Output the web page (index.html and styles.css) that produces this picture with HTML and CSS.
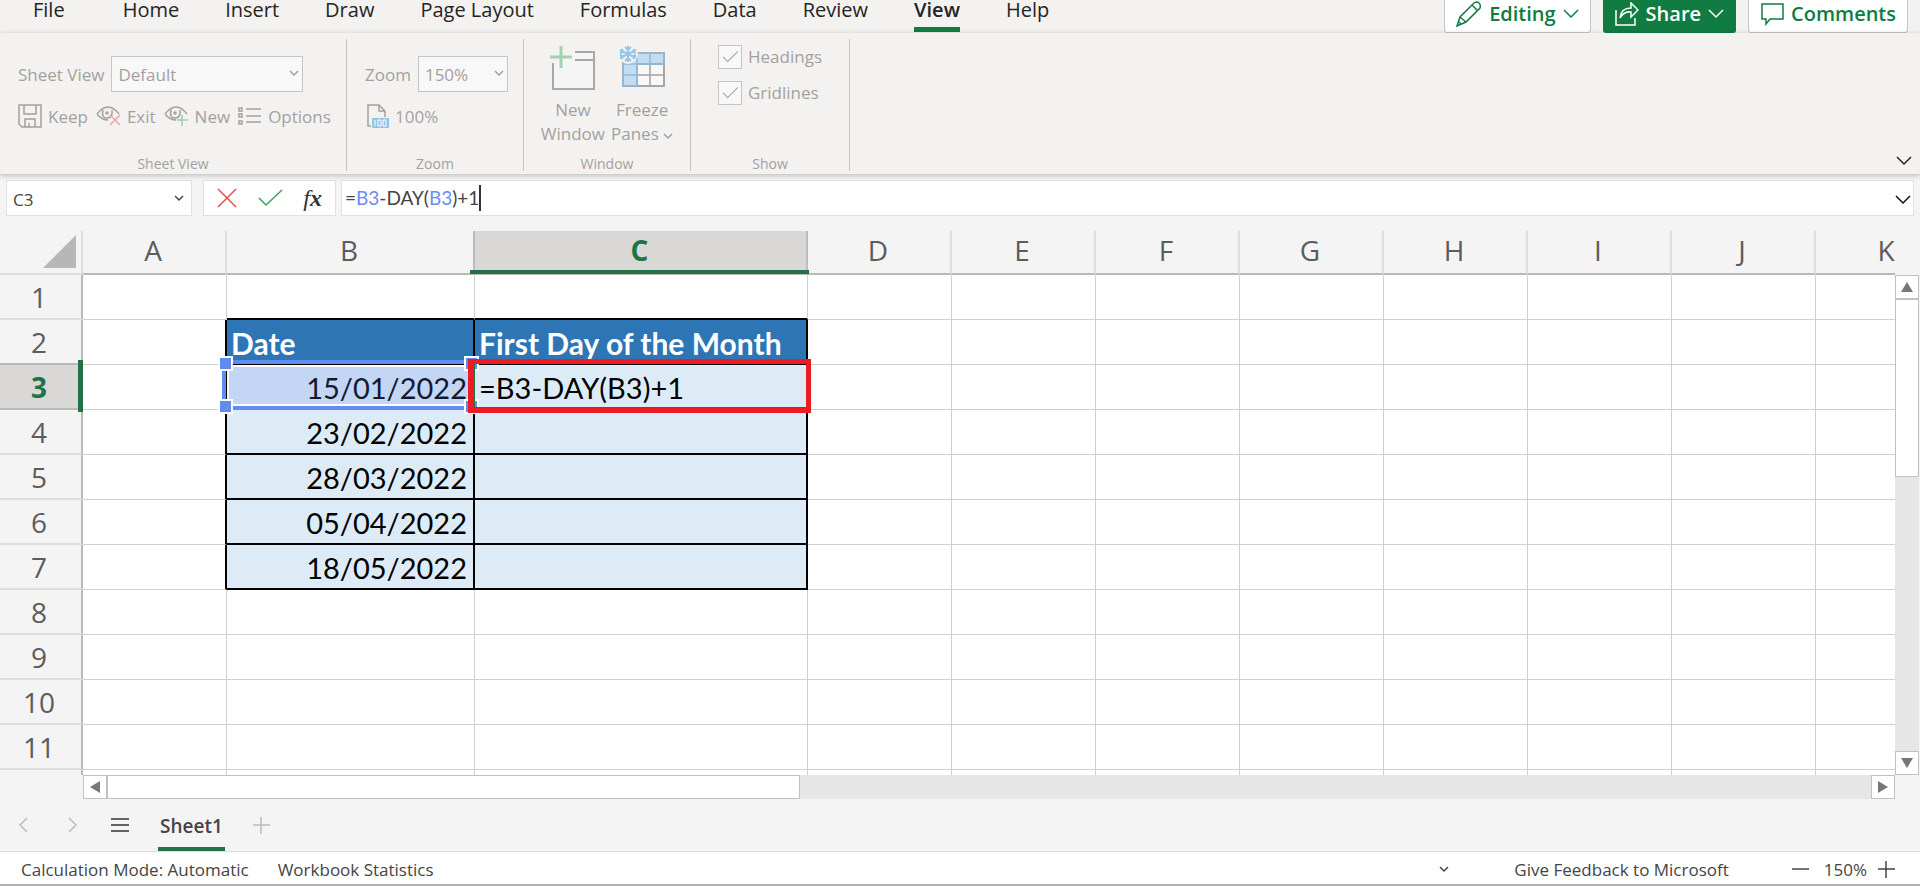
FILE: index.html
```html
<!DOCTYPE html>
<html lang="en">
<head>
  <meta charset="UTF-8" />
  <title>Book1 | Excel</title>
  <meta name="viewport" content="width=device-width, initial-scale=1.0" />
  <link rel="stylesheet" href="styles.css">
</head>
<body>

  <header class="topbar">
    <nav class="tabs">
      <a href="#" class="tab tab-file">File</a>
      <a href="#" class="tab">Home</a>
      <a href="#" class="tab">Insert</a>
      <a href="#" class="tab">Draw</a>
      <a href="#" class="tab">Page Layout</a>
      <a href="#" class="tab">Formulas</a>
      <a href="#" class="tab">Data</a>
      <a href="#" class="tab">Review</a>
      <a href="#" class="tab active">View</a>
      <a href="#" class="tab">Help</a>
    </nav>
    <div class="actions">
      <button class="action">
        <svg width="26" height="26" viewBox="0 0 26 26"><path d="M1 25l3-9L18 2q3-2 5 0t1 5L10 21zM4 16l6 5M16 4l6 6M3 21l2 2"/></svg>
        Editing
        <svg class="chev" width="16" height="10" viewBox="0 0 16 10"><path d="M1 1l7 7 7-7"/></svg>
      </button>
      <button class="action share">
        <svg width="24" height="24" viewBox="0 0 24 24"><path d="M1 8v15h19v-7M5 16q1-10 11-10V1l7 7-7 7v-5q-7-1-11 6z"/></svg>
        Share
        <svg class="chev" width="16" height="10" viewBox="0 0 16 10"><path d="M1 1l7 7 7-7"/></svg>
      </button>
      <button class="action comments">
        <svg width="24" height="24" viewBox="0 0 24 24"><path d="M2 2h21v15H10l-4 5v-5H2z"/></svg>
        Comments
      </button>
    </div>
  </header>

  <div class="ribbon">
    <section class="group group-view">
      <div class="group-body">
        <div class="line">
          <label for="sheetView">Sheet View</label>
          <span class="select-wrap wide">
            <select id="sheetView"><option>Default</option></select>
            <svg width="10" height="7" viewBox="0 0 10 7"><path d="M1 1l4 4 4-4"/></svg>
          </span>
        </div>
        <div class="line tools">
          <button class="tool">
            <svg width="24" height="24" viewBox="0 0 24 24"><path d="M1 1h22v22H4l-3-3zM6 1v9h12V1M7 23v-8h10v8M11 19v4"/></svg>
            Keep
          </button>
          <button class="tool">
            <svg width="25" height="20" viewBox="0 0 25 20"><path d="M1 8q11-14 22 0M1 8q5 6 11 6M7 4q-2 8 4 8 6 0 5-8"/><circle cx="11" cy="7" r="1"/><path class="red" d="M14 9l10 10M24 9L14 19"/></svg>
            Exit
          </button>
          <button class="tool">
            <svg width="25" height="20" viewBox="0 0 25 20"><path d="M1 8q11-14 22 0M1 8q5 6 11 6M7 4q-2 8 4 8 6 0 5-8"/><circle cx="11" cy="7" r="1"/><path class="green" d="M18 9v11M13 14h11"/></svg>
            New
          </button>
          <button class="tool">
            <svg width="24" height="18" viewBox="0 0 24 18"><path d="M1 1h3v3H1zM1 7h3v3H1zM1 14h3v3H1zM8 2h15M8 9h15M8 15h15"/></svg>
            Options
          </button>
        </div>
      </div>
      <h2>Sheet View</h2>
    </section>

    <section class="group group-zoom">
      <div class="group-body">
        <div class="line">
          <label for="zoom">Zoom</label>
          <span class="select-wrap">
            <select id="zoom"><option>150%</option></select>
            <svg width="10" height="7" viewBox="0 0 10 7"><path d="M1 1l4 4 4-4"/></svg>
          </span>
        </div>
        <div class="line tools">
          <button class="tool zoom-full">
            <svg width="22" height="24" viewBox="0 0 22 24"><path d="M4 22H1V1h11l6 6v6M12 1v6h6"/><rect class="badge" x="5" y="14" width="17" height="10"/><path class="badge-text" d="M8 16v6M11 16h3v6h-3zM16 16h3v6h-3z"/></svg>
            100%
          </button>
        </div>
      </div>
      <h2>Zoom</h2>
    </section>

    <section class="group group-window">
      <div class="group-body bigs">
        <button class="big">
          <svg width="48" height="46" viewBox="0 0 48 46"><path class="pane" d="M4 18v26h41V7H26M26 15h19"/><path class="plus" d="M12 1v22M1 12h22"/></svg>
          New<br>Window
        </button>
        <button class="big">
          <svg width="48" height="46" viewBox="0 0 48 46"><path class="cells" d="M5 8h41v33H5z"/><path class="frozen" d="M5 8h41v11H19v22H5z"/><path d="M19 19h27v22H19M19 30h27M32 19v22"/><path class="ice" d="M5 19h14M5 30h14M32 8v11M19 8v33M5 8h41v11H19v22H5z"/><circle class="halo" cx="10" cy="9" r="10"/><path class="flake" d="M10 1v16M2 5l16 8M2 13l16-8M7 2l3 3 3-3M7 16l3-3 3 3M2 8l3-1-1-3M18 8l-3-1 1-3M2 10l3 1-1 3M18 10l-3 1 1 3"/></svg>
          Freeze<br>Panes <svg class="mini" width="10" height="7" viewBox="0 0 10 7"><path d="M1 1l4 4 4-4"/></svg>
        </button>
      </div>
      <h2>Window</h2>
    </section>

    <section class="group group-show">
      <div class="group-body checks">
        <label class="check"><input type="checkbox" checked />Headings</label>
        <label class="check"><input type="checkbox" checked />Gridlines</label>
      </div>
      <h2>Show</h2>
    </section>

    <button class="collapse" aria-label="Collapse ribbon">
      <svg class="chev" width="16" height="10" viewBox="0 0 16 10"><path d="M1 1l7 7 7-7"/></svg>
    </button>
  </div>

  <div class="formula-bar">
    <div class="box name-box">
      <input type="text" aria-label="Name box" value="C3" />
      <svg width="10" height="7" viewBox="0 0 10 7"><path d="M1 1l4 4 4-4"/></svg>
    </div>
    <div class="box fx-box">
      <button aria-label="Cancel"><svg class="cancel" width="20" height="20" viewBox="0 0 20 20"><path d="M1 1l18 18M19 1L1 19"/></svg></button>
      <button aria-label="Enter"><svg class="enter" width="25" height="18" viewBox="0 0 25 18"><path d="M1 9l7 7L24 1"/></svg></button>
      <button class="fx" aria-label="Insert function"><i>f<b>x</b></i></button>
    </div>
    <div class="box formula">
      <div class="formula-text" role="textbox" aria-label="Formula" contenteditable="true" spellcheck="false">=<span class="ref">B3</span>-DAY(<span class="ref">B3</span>)+1<span class="caret"></span></div>
      <button aria-label="Expand formula bar">
        <svg class="chev" width="16" height="10" viewBox="0 0 16 10"><path d="M1 1l7 7 7-7"/></svg>
      </button>
    </div>
  </div>

  <main class="sheet">
    <div class="grid">
      <table>
        <colgroup>
          <col class="c-head"><col class="c-std"><col class="c-date"><col class="c-first">
          <col class="c-std"><col class="c-std"><col class="c-std"><col class="c-std">
          <col class="c-std"><col class="c-std"><col class="c-std"><col class="c-std">
        </colgroup>
        <thead>
          <tr><th class="corner"></th><th>A</th><th class="before">B</th><th class="current">C</th><th>D</th><th>E</th><th>F</th><th>G</th><th>H</th><th>I</th><th>J</th><th>K</th></tr>
        </thead>
        <tbody>
          <tr><th>1</th><td></td><td class="above"></td><td class="above"></td><td></td><td></td><td></td><td></td><td></td><td></td><td></td><td></td></tr>
          <tr><th class="before">2</th><td class="beside"></td><td class="title">Date</td><td class="title">First Day of the Month</td><td></td><td></td><td></td><td></td><td></td><td></td><td></td><td></td></tr>
          <tr><th class="current">3</th><td class="beside"></td><td class="data">15/01/2022<span class="range"></span><span class="handle tl"></span><span class="handle tr"></span><span class="handle bl"></span><span class="handle br"></span></td><td class="data text">=B3-DAY(B3)+1<span class="editor"></span></td><td></td><td></td><td></td><td></td><td></td><td></td><td></td><td></td></tr>
          <tr><th>4</th><td class="beside"></td><td class="data">23/02/2022</td><td class="data"></td><td></td><td></td><td></td><td></td><td></td><td></td><td></td><td></td></tr>
          <tr><th>5</th><td class="beside"></td><td class="data">28/03/2022</td><td class="data"></td><td></td><td></td><td></td><td></td><td></td><td></td><td></td><td></td></tr>
          <tr><th>6</th><td class="beside"></td><td class="data">05/04/2022</td><td class="data"></td><td></td><td></td><td></td><td></td><td></td><td></td><td></td><td></td></tr>
          <tr><th>7</th><td class="beside"></td><td class="data">18/05/2022</td><td class="data"></td><td></td><td></td><td></td><td></td><td></td><td></td><td></td><td></td></tr>
          <tr><th>8</th><td></td><td></td><td></td><td></td><td></td><td></td><td></td><td></td><td></td><td></td><td></td></tr>
          <tr><th>9</th><td></td><td></td><td></td><td></td><td></td><td></td><td></td><td></td><td></td><td></td><td></td></tr>
          <tr><th>10</th><td></td><td></td><td></td><td></td><td></td><td></td><td></td><td></td><td></td><td></td><td></td></tr>
          <tr><th>11</th><td></td><td></td><td></td><td></td><td></td><td></td><td></td><td></td><td></td><td></td><td></td></tr>
          <tr><th></th><td></td><td></td><td></td><td></td><td></td><td></td><td></td><td></td><td></td><td></td><td></td></tr>
        </tbody>
      </table>
    </div>
    <div class="scroll vertical">
      <button aria-label="Scroll up"><svg width="12" height="10" viewBox="0 0 12 10"><path d="M6 0l6 10H0z"/></svg></button>
      <div class="track"><div class="thumb"></div></div>
      <button aria-label="Scroll down"><svg width="12" height="10" viewBox="0 0 12 10"><path d="M0 0h12L6 10z"/></svg></button>
    </div>
  </main>

  <div class="scroll horizontal">
    <button aria-label="Scroll left"><svg width="10" height="12" viewBox="0 0 10 12"><path d="M10 0v12L0 6z"/></svg></button>
    <div class="track"><div class="thumb"></div></div>
    <button aria-label="Scroll right"><svg width="10" height="12" viewBox="0 0 10 12"><path d="M0 0l10 6-10 6z"/></svg></button>
  </div>

  <nav class="sheet-tabs">
    <button class="nav-btn" aria-label="Previous sheet"><svg width="9" height="16" viewBox="0 0 9 16"><path d="M8 1L1 8l7 7"/></svg></button>
    <button class="nav-btn" aria-label="Next sheet"><svg width="9" height="16" viewBox="0 0 9 16"><path d="M1 1l7 7-7 7"/></svg></button>
    <button class="all-sheets" aria-label="All sheets"><svg width="18" height="16" viewBox="0 0 18 16"><path d="M0 2h18M0 8h18M0 14h18"/></svg></button>
    <a href="#" class="sheet-tab">Sheet1</a>
    <button class="add" aria-label="New sheet"><svg width="17" height="17" viewBox="0 0 17 17"><path d="M8 0v17M0 8h17"/></svg></button>
  </nav>

  <footer class="status">
    <span>Calculation Mode: Automatic</span>
    <a href="#">Workbook Statistics</a>
    <svg class="status-chev" width="10" height="7" viewBox="0 0 10 7"><path d="M1 1l4 4 4-4"/></svg>
    <a href="#" class="feedback">Give Feedback to Microsoft</a>
    <button aria-label="Zoom out"><svg width="17" height="17" viewBox="0 0 17 17"><path d="M0 8h17"/></svg></button>
    <span class="zoom-value">150%</span>
    <button aria-label="Zoom in"><svg width="17" height="17" viewBox="0 0 17 17"><path d="M8 0v17M0 8h17"/></svg></button>
  </footer>

</body>
</html>
```

FILE: styles.css
```css
* {
  box-sizing: border-box;
}

body {
  margin: 0;
  height: 100vh;
  display: flex;
  flex-direction: column;
  overflow: hidden;
  font-family: "Open Sans", "Noto Sans", sans-serif;
  font-size: 17px;
  color: #444;
  background: #f4f4f4;
}

a {
  color: inherit;
  text-decoration: none;
}

button {
  margin: 0;
  padding: 0;
  border: none;
  background: none;
  font: inherit;
  color: inherit;
  cursor: pointer;
}

svg {
  flex: none;
  fill: none;
  stroke: currentColor;
  stroke-width: 1.5;
}

/* Top bar */
.topbar {
  display: flex;
  justify-content: space-between;
  height: 33px;
  padding: 0 12px 0 33px;
  background: #f3f2f0;
}

.tabs {
  display: flex;
  gap: 46px;
  font-size: 20px;
  line-height: 20px;
  color: #252423;
}

.tab {
  height: 32px;
  border-bottom: 5px solid transparent;
}

.tab-file {
  margin-right: 12px;
}

.tab.active {
  font-weight: 600;
  border-color: #107c41;
}

.actions {
  display: flex;
  gap: 12px;
}

.action {
  display: flex;
  align-items: center;
  gap: 7px;
  padding: 0 11px 5px;
  font-size: 20px;
  font-weight: 600;
  line-height: 26px;
  color: #107c41;
  background: #fff;
  border: 1px solid #c8c6c4;
  border-top: none;
  border-radius: 0 0 3px 3px;
}

.share {
  color: #fff;
  background: #107c41;
  border-color: #107c41;
}

/* Ribbon */
.ribbon {
  position: relative;
  z-index: 1;
  flex: none;
  display: flex;
  height: 142px;
  padding: 6px 8px 3px 0;
  color: #a3a19f;
  background: #f3f2f0;
  border-bottom: 1px solid #d0cfcb;
  box-shadow: 0 1px 5px rgba(0, 0, 0, 0.2);
}

.group {
  display: flex;
  flex-direction: column;
  justify-content: space-between;
  border-right: 1px solid #c6c5c3;
}

.group h2 {
  margin: 0;
  font-size: 14px;
  font-weight: 400;
  line-height: 14px;
  text-align: center;
}

.group-view {
  width: 347px;
}

.group-zoom {
  width: 177px;
}

.group-window {
  width: 167px;
}

.group-show {
  width: 159px;
}

.group-view .group-body,
.group-zoom .group-body {
  padding: 17px 0 0 18px;
}

.line {
  display: flex;
  align-items: center;
  gap: 7px;
  height: 36px;
}

.line.tools {
  gap: 8px;
  height: 48px;
}

.tool {
  display: flex;
  align-items: center;
  gap: 6px;
}

.zoom-full {
  padding-left: 2px;
}

.select-wrap {
  position: relative;
  width: 90px;
}

.select-wrap.wide {
  width: 192px;
}

select {
  width: 100%;
  height: 36px;
  padding: 0 6px;
  appearance: none;
  font: inherit;
  color: inherit;
  background: #f8f8f8;
  border: 1px solid #c6c4c4;
  border-radius: 0;
}

.select-wrap svg {
  position: absolute;
  right: 4px;
  top: 14px;
}

.red {
  stroke: #f0a5a5;
}

.green {
  stroke: #9bd0a9;
}

.badge {
  fill: #93c5e4;
  stroke: none;
}

.badge-text {
  stroke: #fff;
  stroke-width: 1;
}

.bigs {
  display: flex;
  justify-content: center;
  gap: 6px;
  padding-top: 6px;
}

.big {
  line-height: 24px;
  text-align: center;
}

.big > svg {
  display: block;
  margin: 0 auto 7px;
}

.big .mini {
  display: inline;
  margin: 0;
}

.pane {
  fill: #f5f5f5;
  stroke: #a9a8a6;
  stroke-width: 2;
}

.plus {
  stroke: #a5d3b1;
  stroke-width: 3;
}

.cells {
  fill: #f8f8f8;
}

.frozen {
  fill: #c5dcf0;
}

.ice {
  stroke: #8fb9de;
}

.halo {
  fill: #f3f2f0;
  stroke: none;
}

.flake {
  stroke: #93c7e6;
  stroke-width: 2;
}

.checks {
  display: flex;
  flex-direction: column;
  gap: 12px;
  padding: 6px 0 0 27px;
}

.check {
  display: flex;
  align-items: center;
  gap: 6px;
  line-height: 24px;
}

.check input {
  position: relative;
  width: 24px;
  height: 24px;
  margin: 0;
  appearance: none;
  background: #f8f8f8;
  border: 1px solid #c6c4c4;
}

.check input:checked::after {
  content: "";
  position: absolute;
  left: 8px;
  top: 1px;
  width: 6px;
  height: 14px;
  border: solid #a3a19f;
  border-width: 0 1px 1px 0;
  transform: rotate(45deg);
}

.collapse {
  align-self: flex-end;
  margin-left: auto;
  color: #252423;
}

/* Formula bar */
.formula-bar {
  flex: none;
  display: flex;
  height: 56px;
  padding: 5px 6px 15px;
}

.box {
  display: flex;
  align-items: center;
  background: #fff;
  border: 1px solid #e1e1e1;
}

.name-box {
  width: 186px;
  margin-right: 11px;
  padding-right: 7px;
}

.name-box input {
  flex: 1;
  min-width: 0;
  padding: 2px 6px 0;
  font: inherit;
  color: inherit;
  background: none;
  border: none;
}

.fx-box {
  justify-content: space-between;
  width: 133px;
  margin-right: 5px;
  padding: 0 13px;
}

.cancel {
  stroke: #ec4a4a;
}

.enter {
  stroke: #3da35a;
}

.fx-box svg {
  display: block;
}

.fx {
  font-family: "Liberation Serif", serif;
  font-size: 24px;
  line-height: 28px;
  color: #333;
}

.formula {
  flex: 1;
  padding: 0 2px 0 3px;
}

.formula-text {
  flex: 1;
  display: flex;
  align-items: center;
  font-family: Lato, sans-serif;
  font-size: 19px;
  line-height: 26px;
  outline: none;
}

.ref {
  color: #6a8ff0;
}

.caret {
  width: 2px;
  height: 26px;
  background: #333;
}

.formula .chev {
  color: #111;
}

/* Grid */
.sheet {
  flex: 1;
  min-height: 0;
  display: flex;
  padding-right: 1px;
}

.grid {
  flex: 1;
  min-width: 0;
  overflow: hidden;
}

table {
  width: 1960px;
  table-layout: fixed;
  border-collapse: separate;
  border-spacing: 0;
}

.c-head {
  width: 83px;
}

.c-std {
  width: 144px;
}

.c-date {
  width: 248px;
}

.c-first {
  width: 333px;
}

th {
  position: relative;
  padding: 0;
  font-size: 28px;
  font-weight: 400;
  line-height: 36px;
  color: #5c5c5c;
  background: #f4f4f4;
}

thead th {
  height: 44px;
  padding: 0 2px 4px 0;
  border-right: 2px solid #dedede;
  border-bottom: 2px solid #b9b9b9;
}

thead th.before,
thead th.current {
  border-right-color: #bcbcbc;
}

tbody th {
  height: 45px;
  padding-right: 3px;
  border-right: 2px solid #b9b9b9;
  border-bottom: 2px solid #dedede;
}

tbody th.before,
tbody th.current {
  border-bottom-color: #b9b9b9;
}

th.current {
  z-index: 1;
  font-weight: 700;
  color: #217346;
  background: #d9d8d6;
}

thead th.current::after {
  content: "";
  position: absolute;
  left: -5px;
  right: -3px;
  bottom: -1px;
  height: 4px;
  background: #217346;
}

tbody th.current::after {
  content: "";
  position: absolute;
  right: -2px;
  top: -5px;
  bottom: -4px;
  width: 5px;
  background: #217346;
}

thead th.corner {
  border-bottom-color: #dedede;
}

.corner::after {
  content: "";
  position: absolute;
  right: 5px;
  bottom: 5px;
  border-left: 33px solid transparent;
  border-bottom: 33px solid #b7b7b7;
}

td {
  position: relative;
  height: 45px;
  padding: 2px 6px 0 4px;
  font-family: Lato, sans-serif;
  font-size: 29px;
  line-height: 34px;
  white-space: nowrap;
  color: #000;
  background: #fff;
  border-right: 1px solid #d0d0d0;
  border-bottom: 1px solid #d0d0d0;
}

td.above {
  border-bottom: 2px solid #000;
}

td.beside {
  border-right: 2px solid #000;
}

td.title,
td.data {
  border-right: 2px solid #000;
  border-bottom: 2px solid #000;
}

td.title {
  font-size: 30px;
  font-weight: 700;
  color: #fff;
  background: #2e75b6;
}

td.data {
  text-align: right;
  background: #ddebf6;
}

td.data.text {
  text-align: left;
}

/* Referenced cell outline and its drag handles */
.range {
  position: absolute;
  z-index: 1;
  inset: -5px -2px -2px -5px;
  border: 4px solid #5f8dee;
}

.range::before {
  content: "";
  position: absolute;
  inset: 1px 0 0 1px;
  background: rgba(95, 130, 238, 0.2);
  border: 2px solid #fff;
}

.handle {
  position: absolute;
  z-index: 1;
  width: 11px;
  height: 11px;
  background: #5f8dee;
  box-shadow: 0 0 0 2px #fff;
}

.tl,
.tr {
  top: -7px;
}

.bl,
.br {
  bottom: -4px;
}

.tl,
.bl {
  left: -7px;
}

.tr,
.br {
  right: -4px;
}

.editor {
  position: absolute;
  z-index: 2;
  inset: -6px -5px -5px -7px;
  border: 5px solid #ed1c24;
  border-left-width: 6px;
  box-shadow: inset 1px -1px 0 #217346;
}

/* Scrollbars */
.scroll {
  flex: none;
  display: flex;
}

.vertical {
  flex-direction: column;
  width: 24px;
  margin-top: 44px;
}

.horizontal {
  height: 24px;
  margin: 0 25px 0 83px;
}

.scroll button {
  flex: none;
  display: flex;
  align-items: center;
  justify-content: center;
  width: 24px;
  height: 24px;
  background: #fff;
  border: 1px solid #bfc1c2;
}

.scroll svg {
  fill: #777;
  stroke: none;
}

.track {
  flex: 1;
  display: flex;
  background: #e6e6e6;
}

.vertical .track {
  flex-direction: column;
}

.thumb {
  flex: 0 0 39.3%;
  background: #fff;
  border: 1px solid #bfc1c2;
}

/* Sheet tabs */
.sheet-tabs {
  flex: none;
  display: flex;
  align-items: center;
  height: 52px;
  padding-left: 19px;
}

.sheet-tabs svg {
  display: block;
}

.nav-btn {
  margin-right: 40px;
  color: #bbb;
}

.all-sheets {
  margin: 0 29px 0 -6px;
  color: #333;
}

.sheet-tab {
  height: 52px;
  padding: 0 2px;
  font-size: 19px;
  font-weight: 600;
  line-height: 54px;
  border-bottom: 4px solid #217346;
}

.add {
  margin-left: 28px;
  color: #bbb;
}

/* Status bar */
.status {
  flex: none;
  display: flex;
  align-items: center;
  height: 35px;
  padding: 3px 25px 0 21px;
  background: #fff;
  border-top: 1px solid #dcdcdc;
  border-bottom: 2px solid #afafaf;
}

.status a {
  margin-left: 29px;
}

.status svg {
  display: block;
}

.status-chev {
  margin-left: auto;
}

.status .feedback {
  margin: 0 63px 0 65px;
}

.zoom-value {
  margin: 0 11px 0 15px;
}
```
